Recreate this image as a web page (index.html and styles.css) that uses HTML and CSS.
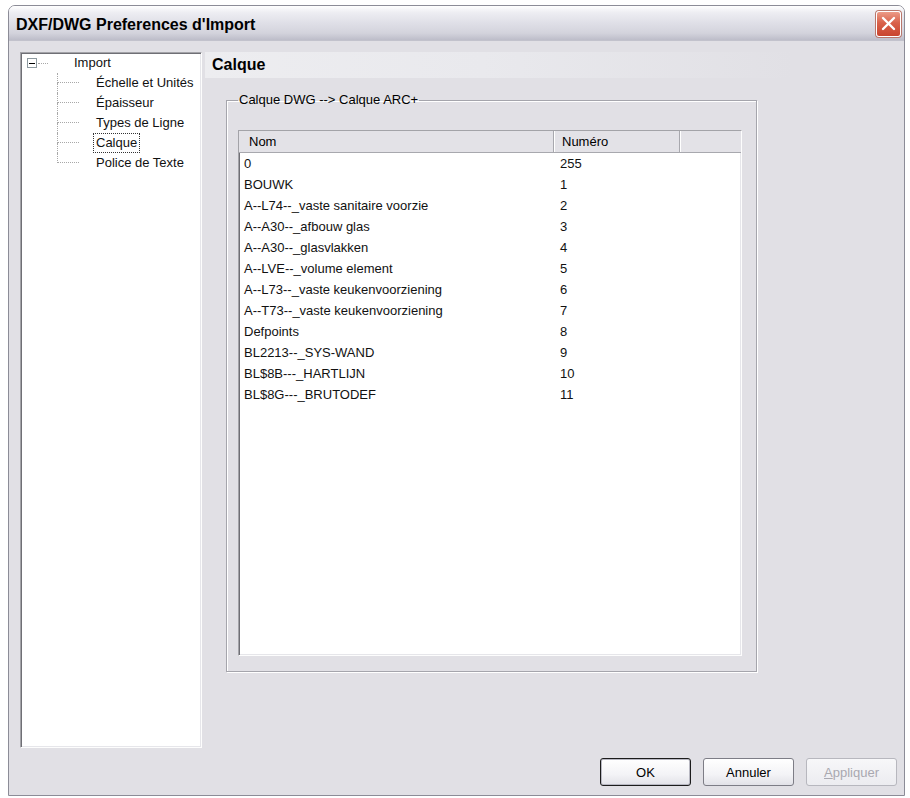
FILE: index.html
```html
<!DOCTYPE html>
<html lang="fr">
<head>
  <meta charset="UTF-8">
  <title>DXF/DWG Preferences d'Import</title>
  <link rel="stylesheet" href="styles.css">
</head>
<body>

<div class="window">
  <!-- barre de titre -->
  <div class="titlebar">
    <span class="title">DXF/DWG Preferences d'Import</span>
    <span class="close">
      <svg width="15" height="15" viewBox="0 0 15 15"><path d="M2 2 L13 13 M13 2 L2 13" stroke="#fff" stroke-width="2.4" stroke-linecap="round"/></svg>
    </span>
  </div>

  <div class="client">
    <div class="main">
      <!-- arbre des préférences -->
      <div class="tree">
        <div class="node root">
          <span class="expander"></span><span class="stub"></span><span class="label">Import</span>
        </div>
        <div class="node child"><span class="branch"><i class="up"></i><i class="down"></i></span><span class="label">Échelle et Unités</span></div>
        <div class="node child"><span class="branch"><i class="up"></i><i class="down"></i></span><span class="label">Épaisseur</span></div>
        <div class="node child"><span class="branch"><i class="up"></i><i class="down"></i></span><span class="label">Types de Ligne</span></div>
        <div class="node child"><span class="branch"><i class="up"></i><i class="down"></i></span><span class="label selected">Calque</span></div>
        <div class="node child"><span class="branch"><i class="up"></i></span><span class="label">Police de Texte</span></div>
      </div>

      <!-- page Calque -->
      <div class="pane">
        <div class="pane-head">Calque</div>
        <fieldset class="group">
          <legend>Calque DWG --&gt; Calque ARC+</legend>
          <div class="listview">
            <div class="lv-head">
              <span>Nom</span><span>Numéro</span><span></span>
            </div>
            <div class="lv-row"><span>0</span><span>255</span></div>
            <div class="lv-row"><span>BOUWK</span><span>1</span></div>
            <div class="lv-row"><span>A--L74--_vaste sanitaire voorzie</span><span>2</span></div>
            <div class="lv-row"><span>A--A30--_afbouw glas</span><span>3</span></div>
            <div class="lv-row"><span>A--A30--_glasvlakken</span><span>4</span></div>
            <div class="lv-row"><span>A--LVE--_volume element</span><span>5</span></div>
            <div class="lv-row"><span>A--L73--_vaste keukenvoorziening</span><span>6</span></div>
            <div class="lv-row"><span>A--T73--_vaste keukenvoorziening</span><span>7</span></div>
            <div class="lv-row"><span>Defpoints</span><span>8</span></div>
            <div class="lv-row"><span>BL2213--_SYS-WAND</span><span>9</span></div>
            <div class="lv-row"><span>BL$8B---_HARTLIJN</span><span>10</span></div>
            <div class="lv-row"><span>BL$8G---_BRUTODEF</span><span>11</span></div>
          </div>
        </fieldset>
      </div>
    </div>

    <div class="buttons">
      <button class="btn default">OK</button>
      <button class="btn">Annuler</button>
      <button class="btn" disabled><u>A</u>ppliquer</button>
    </div>
  </div>
</div>

</body>
</html>
```

FILE: styles.css
```css
body { margin: 0; background: #fff; font-family: "Liberation Sans", Arial, sans-serif; font-size: 13px; color: #000; }

.window { margin: 5px 0 0 8px; width: 897px; border: 1px solid #8c8c97; border-radius: 7px 7px 0 0; overflow: hidden; box-sizing: border-box; }

.titlebar { height: 34px; display: flex; align-items: center; justify-content: space-between; padding: 0 3px 0 7px;
  background: linear-gradient(to bottom, #ffffff 0%, #eeeef3 18%, #dfdfe7 50%, #d3d3dc 80%, #bdbdc9 100%);
  border-bottom: 1px solid #c2c2cc; }
.title { font-weight: bold; font-size: 16px; color: #000; padding-top: 4px; }
.close { width: 23px; height: 24px; display: flex; align-items: center; justify-content: center; border: 1px solid #fff; border-radius: 3px;
  box-shadow: 0 0 0 1px #b9776c; background: linear-gradient(to bottom, #ec9b87, #d9624b 45%, #c9452f); margin-top: 1px; }

.client { background: #e1e0e5; padding: 11px 7px 9px 11px; }
.main { display: grid; grid-template-columns: 182px 1fr; column-gap: 3px; height: 696px; }

/* cadres enfoncés */
.tree, .listview { background: #fff; border: 1px solid; border-color: #a3a3a8 #fdfdfd #fdfdfd #a3a3a8;
  box-shadow: inset 1px 1px 0 #6f6f75, inset -1px -1px 0 #e6e6ea; box-sizing: border-box; }

.node { height: 20px; display: flex; align-items: center; }
.root .expander { width: 10px; height: 10px; margin-left: 6px; border: 1px solid #8e9aa0; box-sizing: border-box; background: #fff;
  display: flex; align-items: center; justify-content: center; }
.root .expander::after { content: ""; width: 6px; height: 1px; background: #000; }
.root .stub { width: 10px; border-top: 1px dotted #a8a8a8; margin-left: 1px; }
.root .label { margin-left: 23px; }
.child .branch { margin-left: 36px; width: 22px; align-self: stretch; display: flex; flex-direction: column; }
.branch i { display: block; height: 10px; border-left: 1px dotted #a8a8a8; box-sizing: border-box; }
.branch .up { border-bottom: 1px dotted #a8a8a8; }
.child .label { margin-left: 14px; }
.label { padding: 1px 2px; line-height: 16px; border: 1px solid transparent; color: #111; }
.label.selected { border: 1px dotted #333; }

.pane-head { height: 26px; display: flex; align-items: center; padding-left: 7px; font-weight: bold; font-size: 16px;
  background: linear-gradient(to right, #ededf0, #e9e9ed 40%, #e1e0e5 85%); }

.group { margin: 14px 0 0 21px; width: 531px; box-sizing: border-box; padding: 22px 14px 15px 11px;
  border: 1px solid #a5a5ac; box-shadow: 1px 1px 0 #fff, inset 1px 1px 0 #fff; }
.group legend { padding: 0 1px; line-height: 16px; }

.listview { height: 526px; overflow: hidden; }
.lv-head { display: grid; grid-template-columns: 315px 126px 1fr; height: 21px; background: #e3e2e7; border-bottom: 1px solid #a8a8ae; }
.lv-head span { display: flex; align-items: center; border-right: 1px solid #a8a8ae; box-shadow: 1px 0 0 #fff; }
.lv-head span:first-child { padding-left: 10px; }
.lv-head span:nth-child(2) { padding-left: 8px; }
.lv-head span:last-child { border-right: none; box-shadow: none; }
.lv-row { display: grid; grid-template-columns: 315px 126px; height: 21px; align-items: center; color: #111; }
.lv-row span:first-child { padding-left: 5px; }
.lv-row span:last-child { padding-left: 6px; }

.buttons { display: flex; justify-content: flex-end; gap: 12px; margin-top: 10px; }
.btn { width: 91px; height: 28px; font: inherit; color: #000; border: 1px solid #7d7d86; border-radius: 3px;
  background: linear-gradient(to bottom, #ffffff, #f3f3f6 60%, #e2e2e8); padding: 0; }
.btn.default { border-color: #1c1c1c; box-shadow: inset 0 0 0 1px #b8b8c2; }
.btn:disabled { color: #a9a8b0; border-color: #b7b7be; background: linear-gradient(to bottom, #f7f7f9, #ececf0); }
```
